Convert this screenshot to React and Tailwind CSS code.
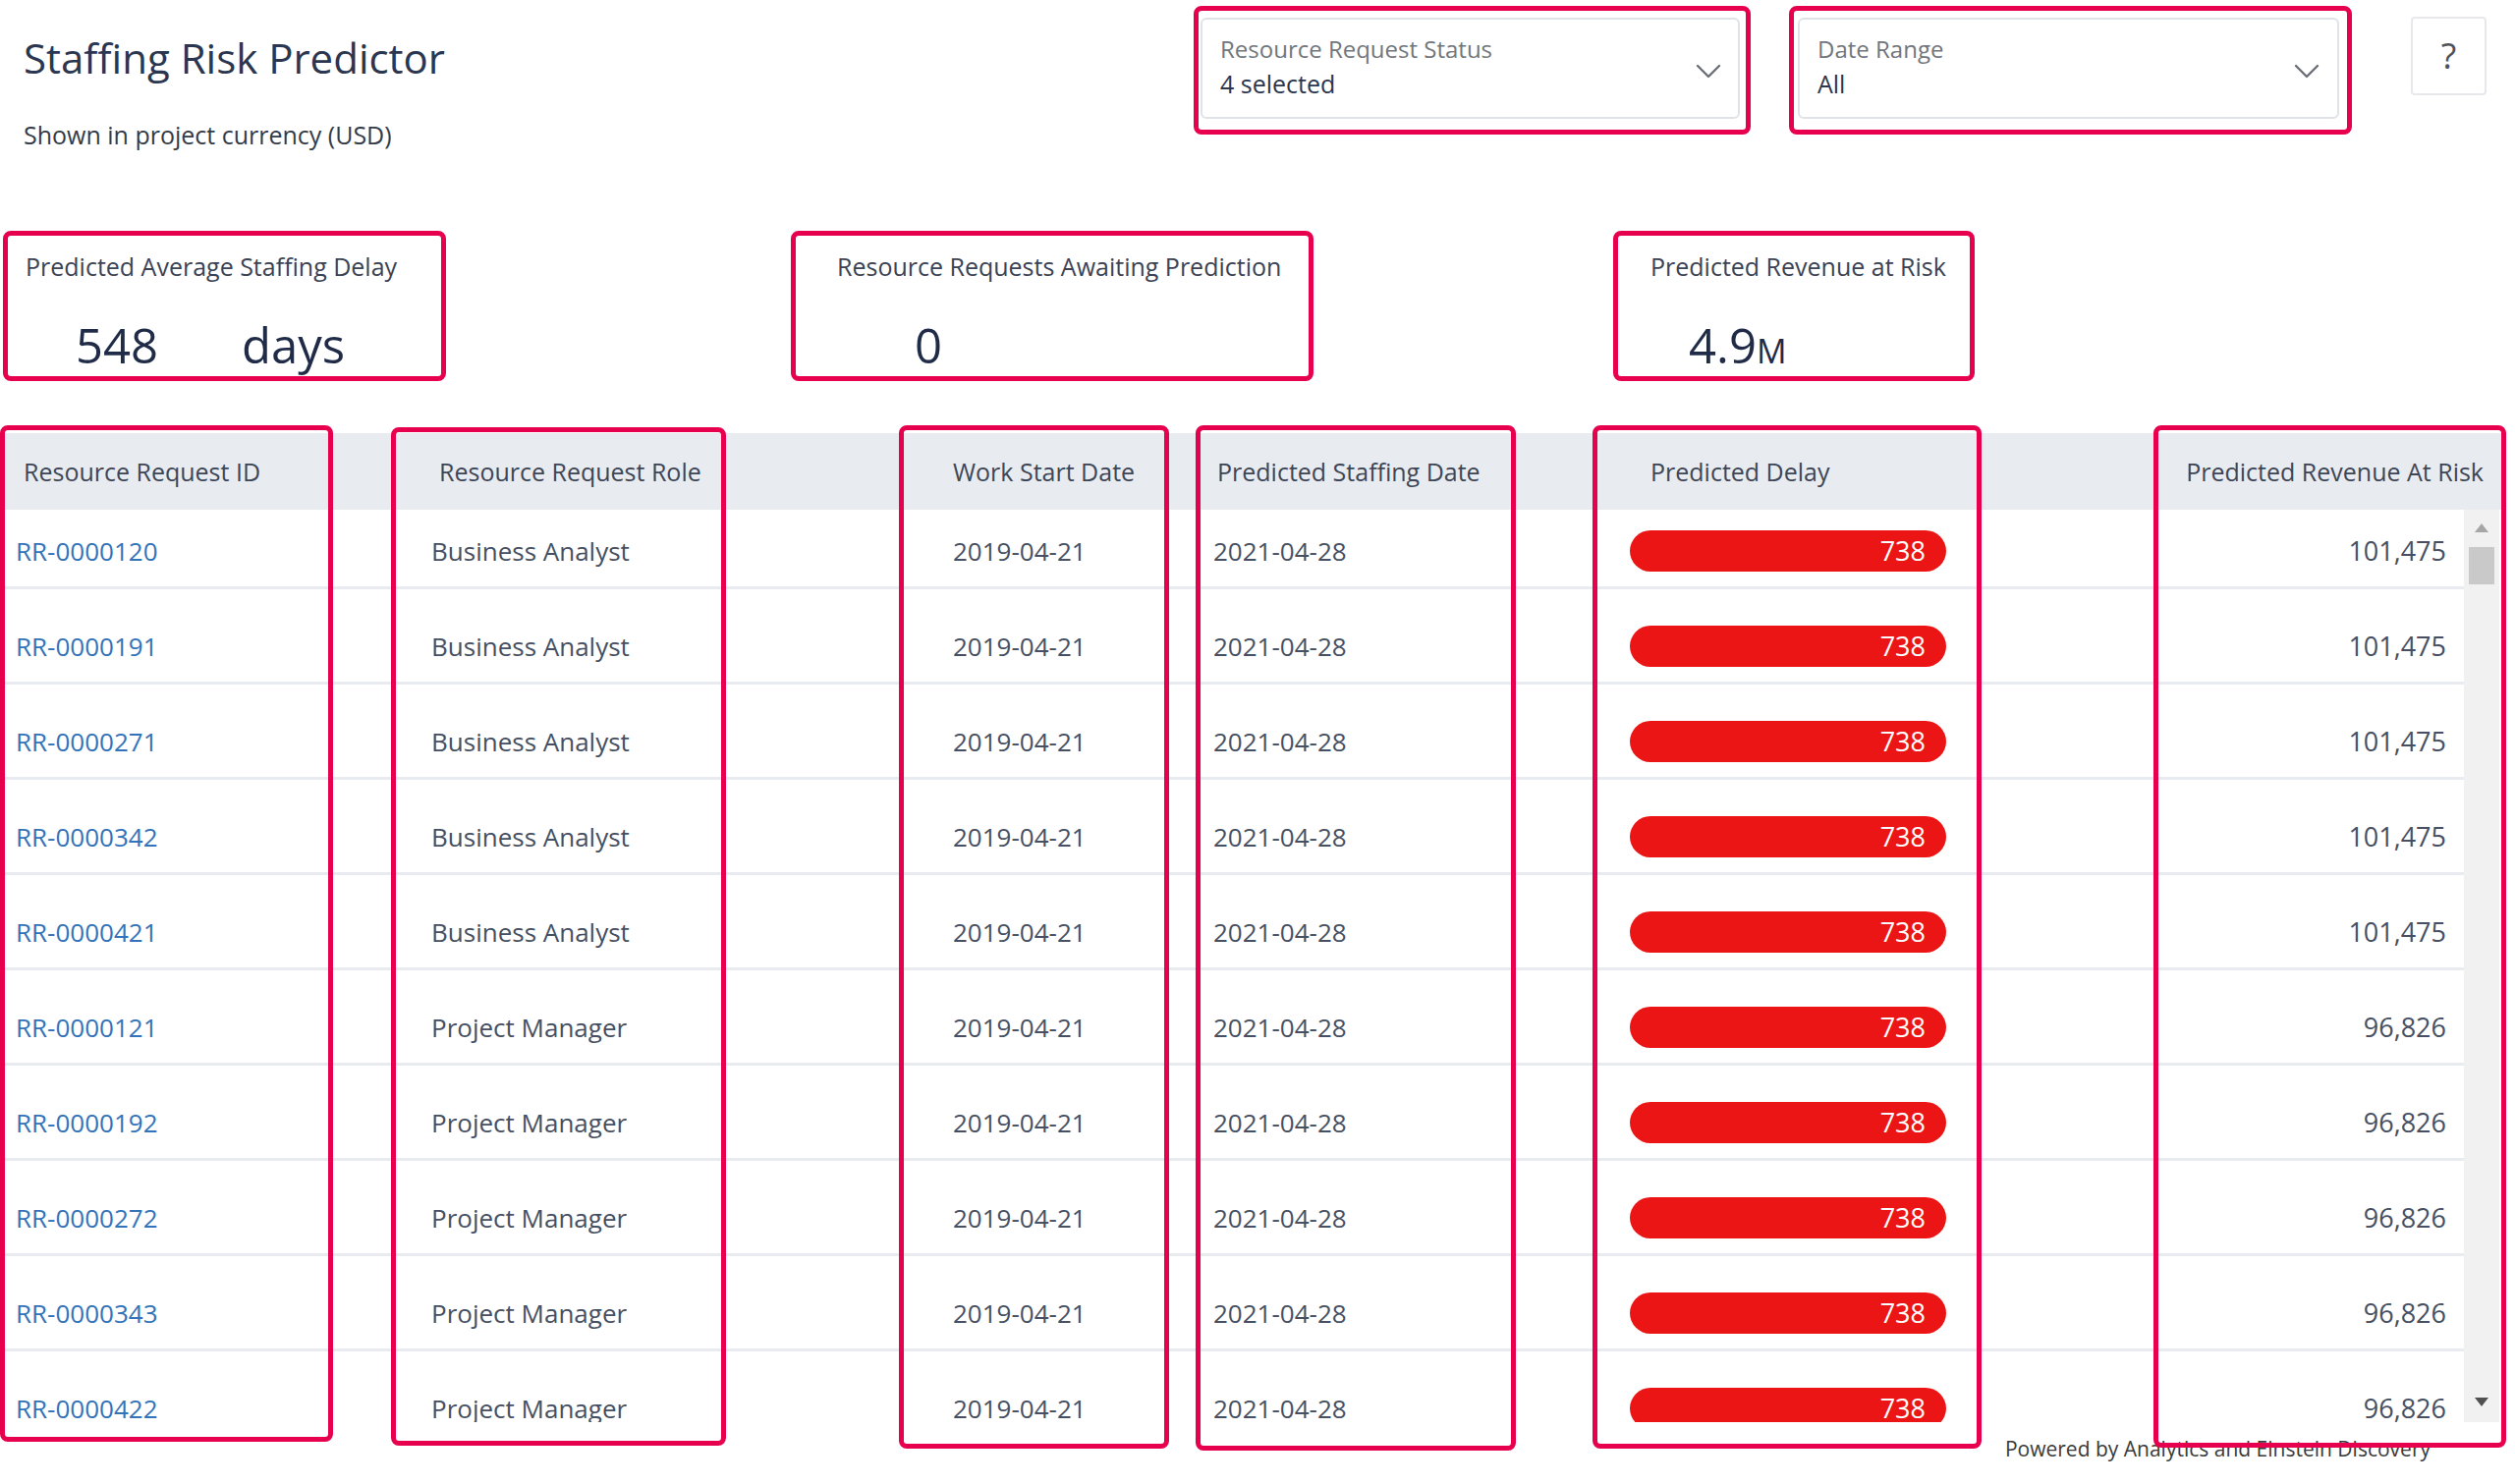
const rows = [
  ["RR-0000120", "Business Analyst", "101,475"],
  ["RR-0000191", "Business Analyst", "101,475"],
  ["RR-0000271", "Business Analyst", "101,475"],
  ["RR-0000342", "Business Analyst", "101,475"],
  ["RR-0000421", "Business Analyst", "101,475"],
  ["RR-0000121", "Project Manager", "96,826"],
  ["RR-0000192", "Project Manager", "96,826"],
  ["RR-0000272", "Project Manager", "96,826"],
  ["RR-0000343", "Project Manager", "96,826"],
  ["RR-0000422", "Project Manager", "96,826"],
];

function Chevron() {
  return (
    <svg width="26" height="15" viewBox="0 0 26 15" className="mt-[5px]">
      <polyline points="2,2 13,13 24,2" fill="none" stroke="#6b6f76" strokeWidth="2.4" strokeLinecap="round" strokeLinejoin="round" />
    </svg>
  );
}

function Dropdown({ label, value, outer, inner }) {
  return (
    <div className={outer}>
      <div className={inner}>
        <div className="pb-[4px]">
          <div className="text-[24px] leading-[32px] text-[#72767d]">{label}</div>
          <div className="mt-[2px] text-[25px] leading-[34px] text-[#2b3650]">{value}</div>
        </div>
        <Chevron />
      </div>
    </div>
  );
}

export default function App() {
  return (
    <div className="relative w-[2560px] h-[1511px] overflow-hidden bg-white font-['Open_Sans',sans-serif] text-[#444c5b]">
      {/* Top header */}
      <div className="flex h-[235px]">
        <div className="w-[1215px] shrink-0 pl-[24px] pt-[31px]">
          <div className="text-[42px] leading-[56px] text-[#2b3650]">Staffing Risk Predictor</div>
          <div className="mt-[33px] text-[25px] leading-[34px] text-[#333b48]">Shown in project currency (USD)</div>
        </div>
        <div className="flex items-start pt-[6px]">
          <Dropdown
            label="Resource Request Status"
            value="4 selected"
            outer="w-[567px] h-[131px] rounded-[8px] border-[5px] border-[#e6004e] pl-[2px] pr-[6px] pt-[7px] pb-[11px]"
            inner="h-full rounded-[6px] border-2 border-[#dfe3e8] flex items-center justify-between pl-[18px] pr-[17px]"
          />
          <Dropdown
            label="Date Range"
            value="All"
            outer="ml-[39px] w-[573px] h-[131px] rounded-[8px] border-[5px] border-[#e6004e] pl-[4px] pr-[8px] pt-[7px] pb-[11px]"
            inner="h-full rounded-[6px] border-2 border-[#dfe3e8] flex items-center justify-between pl-[18px] pr-[18px]"
          />
          <div className="ml-[60px] mt-[11px] w-[77px] h-[80px] rounded-[4px] border-2 border-[#e6e8eb] flex items-center justify-center text-[36px] text-[#4f535a]">
            ?
          </div>
        </div>
      </div>

      {/* KPI row */}
      <div className="flex h-[153px]">
        <div className="ml-[3px] w-[451px] h-[153px] shrink-0 rounded-[8px] border-[5px] border-[#e6004e] pl-[18px] pt-[14px]">
          <div className="text-[25px] leading-[34px] text-[#3b4354]">Predicted Average Staffing Delay</div>
          <div className="mt-[33px] pl-[51px] flex text-[49px] leading-[60px] text-[#1f2b47]">
            <span>548</span>
            <span className="ml-[85px]">days</span>
          </div>
        </div>
        <div className="ml-[351px] w-[532px] h-[153px] shrink-0 rounded-[8px] border-[5px] border-[#e6004e] pl-[42px] pt-[14px]">
          <div className="text-[25px] leading-[34px] text-[#3b4354]">Resource Requests Awaiting Prediction</div>
          <div className="mt-[33px] pl-[79px] flex text-[49px] leading-[60px] text-[#1f2b47]">
            <span>0</span>
          </div>
        </div>
        <div className="ml-[305px] w-[368px] h-[153px] shrink-0 rounded-[8px] border-[5px] border-[#e6004e] pl-[33px] pt-[14px]">
          <div className="text-[25px] leading-[34px] text-[#3b4354]">Predicted Revenue at Risk</div>
          <div className="mt-[33px] pl-[39px] flex items-baseline leading-[60px] text-[#1f2b47]">
            <span className="text-[49px]">4.9</span>
            <span className="text-[34px]">M</span>
          </div>
        </div>
      </div>

      {/* Table */}
      <div className="mt-[53px] w-[2546px]">
        <div className="grid grid-cols-[400px_516px_302px_404px_569px_355px] h-[78px] items-center bg-[#e8ecf1] text-[25px] leading-[34px] text-[#3e4656]">
          <div className="pl-[24px]">Resource Request ID</div>
          <div className="pl-[47px]">Resource Request Role</div>
          <div className="pl-[54px]">Work Start Date</div>
          <div className="pl-[21px]">Predicted Staffing Date</div>
          <div className="pl-[58px]">Predicted Delay</div>
          <div className="pr-[18px] text-right">Predicted Revenue At Risk</div>
        </div>
        <div className="flex h-[929px] overflow-hidden">
          <div className="w-[2508px] shrink-0 overflow-hidden">
            <div className="mt-[-16px]">
              {rows.map((r) => (
                <div
                  key={r[0]}
                  className="grid grid-cols-[400px_516px_302px_404px_569px_317px] h-[97px] items-center border-b-[3px] border-[#e8ecf0] pt-[22px] text-[26px] leading-[34px] text-[#465062]"
                >
                  <div className="pl-[16px] text-[#3373b9]">{r[0]}</div>
                  <div className="pl-[39px]">{r[1]}</div>
                  <div className="pl-[54px]">2019-04-21</div>
                  <div className="pl-[17px]">2021-04-28</div>
                  <div className="pl-[37px]">
                    <div className="w-[322px] h-[42px] rounded-full bg-[#eb1515] flex items-center justify-end pr-[21px] text-[27px] text-white">
                      738
                    </div>
                  </div>
                  <div className="pr-[18px] text-right text-[27px]">{r[2]}</div>
                </div>
              ))}
            </div>
          </div>
          <div className="w-[36px] shrink-0 bg-[#f1f1f1] flex flex-col items-center justify-between pt-[14px] pb-[16px]">
            <div className="flex flex-col items-center">
              <svg width="14" height="9" viewBox="0 0 14 9">
                <polygon points="7,0 14,9 0,9" fill="#a6a6a6" />
              </svg>
              <div className="mt-[15px] w-[26px] h-[38px] bg-[#c9c9c9]" />
            </div>
            <svg width="14" height="9" viewBox="0 0 14 9">
              <polygon points="0,0 14,0 7,9" fill="#505050" />
            </svg>
          </div>
        </div>
      </div>

      {/* Footer */}
      <div className="mt-[13px] flex justify-end pr-[86px] text-[21px] leading-[28px] text-[#3a3a3a]">
        Powered by Analytics and Einstein Discovery
      </div>

      {/* Annotation boxes over table columns */}
      <div className="pointer-events-none absolute left-[0px] top-[433px] w-[339px] h-[1035px] rounded-[8px] border-[5px] border-[#e6004e]" />
      <div className="pointer-events-none absolute left-[398px] top-[435px] w-[341px] h-[1037px] rounded-[8px] border-[5px] border-[#e6004e]" />
      <div className="pointer-events-none absolute left-[915px] top-[433px] w-[275px] h-[1042px] rounded-[8px] border-[5px] border-[#e6004e]" />
      <div className="pointer-events-none absolute left-[1217px] top-[433px] w-[326px] h-[1044px] rounded-[8px] border-[5px] border-[#e6004e]" />
      <div className="pointer-events-none absolute left-[1621px] top-[433px] w-[396px] h-[1042px] rounded-[8px] border-[5px] border-[#e6004e]" />
      <div className="pointer-events-none absolute left-[2192px] top-[433px] w-[359px] h-[1041px] rounded-[8px] border-[5px] border-[#e6004e]" />
    </div>
  );
}
